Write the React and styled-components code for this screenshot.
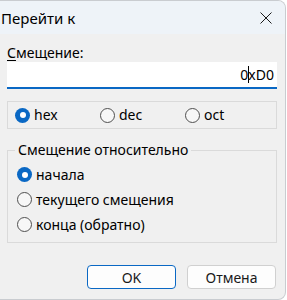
import React from 'react'
import styled, { createGlobalStyle } from 'styled-components'

const Global = createGlobalStyle`
  html, body { margin: 0; padding: 0; background: #ffffff; }
  body { font-family: "Noto Sans", "Open Sans", sans-serif; font-size: 14px; color: #000; }
`

const Window = styled.div`
  width: 285px;
  height: 298px;
  background: #f0f0f0;
  border-top: 1px solid #c9ccd0;
  border-right: 1px solid #c9ccd0;
  border-bottom: 1px solid #c9ccd0;
  border-top-right-radius: 8px;
  border-bottom-right-radius: 8px;
  overflow: hidden;
  display: flex;
  flex-direction: column;
`

const TitleBar = styled.div`
  height: 33px;
  background: #eef3f8;
  display: flex;
  align-items: center;
  justify-content: space-between;
  padding: 0 13px 0 1px;
  font-size: 15px;
`

const Body = styled.div`
  padding: 10px 8px 0 7px;
  display: flex;
  flex-direction: column;
`

const Label = styled.div`
  line-height: 18px;
  height: 18px;
  u { text-decoration: underline; text-underline-offset: 2px; }
`

const InputBox = styled.div`
  height: 25px;
  background: #ffffff;
  border-bottom: 2px solid #0a68c4;
  display: flex;
  align-items: center;
  justify-content: flex-end;
  padding-right: 3px;
  color: #000;
`

const Caret = styled.span`
  display: inline-block;
  width: 1px;
  height: 17px;
  background: #000;
  margin: 0 -1px 0 0;
`

const BaseBox = styled.div`
  margin-top: 12px;
  height: 26px;
  border: 1px solid #dadada;
  display: flex;
  align-items: center;
  padding-left: 7px;
`

const Group = styled.fieldset`
  margin: 12px 0 0 0;
  padding: 6px 0 8px 9px;
  border: 1px solid #dadada;
  display: flex;
  flex-direction: column;
  gap: 6px;
  min-width: 0;
`

const Legend = styled.legend`
  padding: 0 3px;
  margin-left: -2px;
  line-height: 18px;
`

const Option = styled.label`
  display: flex;
  align-items: center;
  gap: 4px;
  height: 19px;
  line-height: 18px;
  width: ${p => p.$w || 'auto'};
`

const Circle = styled.span`
  box-sizing: border-box;
  width: 15px;
  height: 15px;
  border-radius: 50%;
  flex: none;
  border: ${p => (p.$on ? 'none' : '1px solid #4f4f4f')};
  background: ${p => (p.$on ? '#0a68c4' : '#f7f7f7')};
  display: flex;
  align-items: center;
  justify-content: center;
  &::after {
    content: '';
    display: ${p => (p.$on ? 'block' : 'none')};
    width: 6px;
    height: 6px;
    border-radius: 50%;
    background: #fff;
  }
`

const Buttons = styled.div`
  display: flex;
  justify-content: flex-end;
  gap: 11px;
  margin-top: 22px;
  padding-right: 1px;
`

const Button = styled.button`
  width: 89px;
  height: 24px;
  box-sizing: border-box;
  border-radius: 4px;
  background: #fdfdfd;
  border: 1px solid ${p => (p.$primary ? '#0a68c4' : '#d0d0d0')};
  font-family: inherit;
  font-size: 14px;
  color: #1a1a1a;
  padding: 0;
`

const Radio = ({ on, children, w }) => (
  <Option $w={w}>
    <Circle $on={on} />
    <span>{children}</span>
  </Option>
)

export default function App() {
  return (
    <>
      <Global />
      <Window>
        <TitleBar>
          <span>Перейти к</span>
          <svg width="12" height="12" viewBox="0 0 12 12">
            <path d="M0.5 0.5 L11.5 11.5 M11.5 0.5 L0.5 11.5" stroke="#1a1a1a" strokeWidth="1" />
          </svg>
        </TitleBar>
        <Body>
          <Label><u>С</u>мещение:</Label>
          <InputBox>0<Caret />xD0</InputBox>
          <BaseBox>
            <Radio on w="85px">hex</Radio>
            <Radio w="85px">dec</Radio>
            <Radio>oct</Radio>
          </BaseBox>
          <Group>
            <Legend>Смещение относительно</Legend>
            <Radio on>начала</Radio>
            <Radio>текущего смещения</Radio>
            <Radio>конца (обратно)</Radio>
          </Group>
          <Buttons>
            <Button $primary>OK</Button>
            <Button>Отмена</Button>
          </Buttons>
        </Body>
      </Window>
    </>
  )
}
